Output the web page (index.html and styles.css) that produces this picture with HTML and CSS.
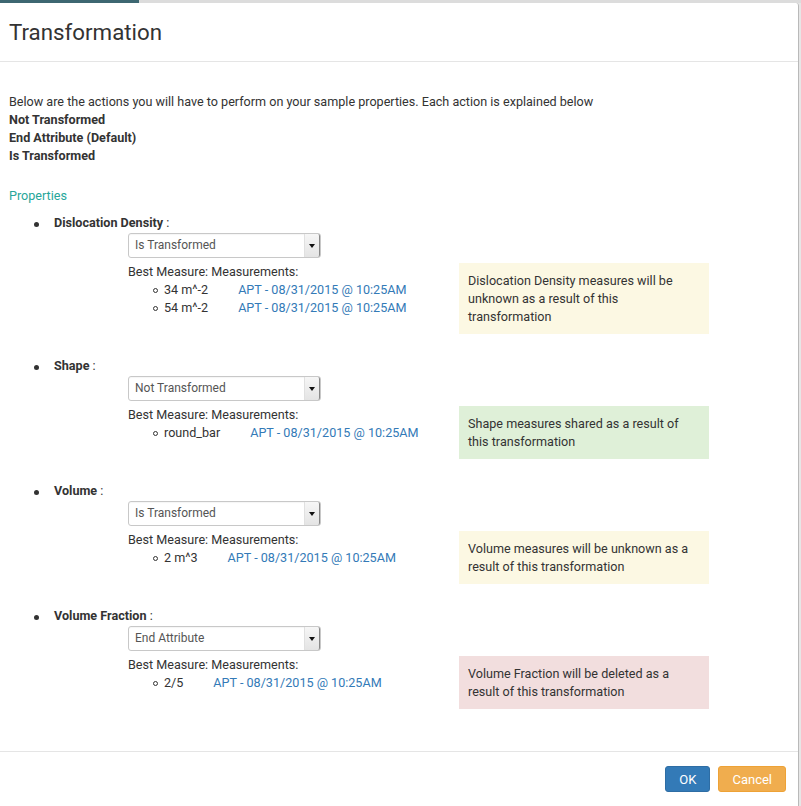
FILE: index.html
```html
<!DOCTYPE html>
<html lang="en">
<head>
<meta charset="utf-8">
<title>Transformation</title>
<link rel="stylesheet" href="styles.css">
</head>
<body>
<div class="topstrip"><div class="topstrip-tab"></div><div class="topstrip-rest"></div></div>
<div class="modal">
  <div class="modal-header">
    <h4 class="modal-title">Transformation</h4>
  </div>
  <div class="modal-body">
    <p class="intro">Below are the actions you will have to perform on your sample properties. Each action is explained below</p>
    <p class="action">Not Transformed</p>
    <p class="action">End Attribute (Default)</p>
    <p class="action">Is Transformed</p>

    <div class="section-title">Properties</div>
    <ul class="props">
      <li class="prop">
        <div class="prop-label"><b>Dislocation Density</b> :</div>
        <div class="prop-body">
          <div class="select"><span class="select-text">Is Transformed</span><span class="select-arrow"></span></div>
          <div class="prop-row">
            <div class="measures">
              <div>Best Measure: Measurements:</div>
              <ul class="mlist">
                <li><span class="val">34 m^-2</span><a class="mlink" href="#">APT - 08/31/2015 @ 10:25AM</a></li>
                <li><span class="val">54 m^-2</span><a class="mlink" href="#">APT - 08/31/2015 @ 10:25AM</a></li>
              </ul>
            </div>
            <div class="alert alert-warning">Dislocation Density measures will be unknown as a result of this transformation</div>
          </div>
        </div>
      </li>
      <li class="prop">
        <div class="prop-label"><b>Shape</b> :</div>
        <div class="prop-body">
          <div class="select"><span class="select-text">Not Transformed</span><span class="select-arrow"></span></div>
          <div class="prop-row">
            <div class="measures">
              <div>Best Measure: Measurements:</div>
              <ul class="mlist">
                <li><span class="val">round_bar</span><a class="mlink" href="#">APT - 08/31/2015 @ 10:25AM</a></li>
              </ul>
            </div>
            <div class="alert alert-success">Shape measures shared as a result of this transformation</div>
          </div>
        </div>
      </li>
      <li class="prop">
        <div class="prop-label"><b>Volume</b> :</div>
        <div class="prop-body">
          <div class="select"><span class="select-text">Is Transformed</span><span class="select-arrow"></span></div>
          <div class="prop-row">
            <div class="measures">
              <div>Best Measure: Measurements:</div>
              <ul class="mlist">
                <li><span class="val">2 m^3</span><a class="mlink" href="#">APT - 08/31/2015 @ 10:25AM</a></li>
              </ul>
            </div>
            <div class="alert alert-warning">Volume measures will be unknown as a result of this transformation</div>
          </div>
        </div>
      </li>
      <li class="prop">
        <div class="prop-label"><b>Volume Fraction</b> :</div>
        <div class="prop-body">
          <div class="select"><span class="select-text">End Attribute</span><span class="select-arrow"></span></div>
          <div class="prop-row">
            <div class="measures">
              <div>Best Measure: Measurements:</div>
              <ul class="mlist">
                <li><span class="val">2/5</span><a class="mlink" href="#">APT - 08/31/2015 @ 10:25AM</a></li>
              </ul>
            </div>
            <div class="alert alert-danger">Volume Fraction will be deleted as a result of this transformation</div>
          </div>
        </div>
      </li>
    </ul>
  </div>
  <div class="modal-footer">
    <button class="btn btn-primary">OK</button>
    <button class="btn btn-warning">Cancel</button>
  </div>
</div>
</body>
</html>
```
FILE: styles.css
```css
html, body {
  margin: 0;
  padding: 0;
}
body {
  background: #e6e6e6;
  font-family: Roboto, "Liberation Sans", Arial, sans-serif;
  font-size: 12.6px;
  line-height: 18px;
  color: #333;
  width: 801px;
  overflow: hidden;
}
.topstrip {
  display: flex;
  height: 3px;
}
.topstrip-tab {
  width: 139px;
  background: #3d6771;
}
.topstrip-rest {
  flex: 1;
  background: #dcdcdc;
}
.modal {
  width: 798px;
  background: #fff;
  border-right: 1px solid #b9b9b9;
  border-top-right-radius: 3px;
}
.modal-header {
  padding: 15px 9px;
  border-bottom: 1px solid #e5e5e5;
}
.modal-title {
  margin: 0;
  font-size: 22.3px;
  line-height: 28px;
  font-weight: 400;
  color: #333;
}
.modal-body {
  padding: 31px 9px 19px;
}
.intro, .action {
  margin: 0;
}
.action {
  font-weight: 700;
}
.section-title {
  margin-top: 22px;
  color: #26a69a;
}
.props {
  list-style: none;
  margin: 9px 0 0;
  padding: 0 0 0 45px;
}
.prop {
  position: relative;
  margin-bottom: 23px;
}
.prop::before {
  content: "";
  position: absolute;
  left: -20px;
  top: 8px;
  width: 5px;
  height: 5px;
  border-radius: 50%;
  background: #333;
}
.prop-label b {
  font-weight: 700;
}
.prop-body {
  margin-left: 74px;
}
.select {
  margin-top: 1px;
  width: 191px;
  height: 23px;
  border: 1px solid #c8c8c8;
  border-radius: 3px;
  display: flex;
  align-items: stretch;
  background: #fff;
  box-shadow: inset 0 1px 1px rgba(0,0,0,0.04);
}
.select-text {
  flex: 1;
  padding-left: 6px;
  font-size: 12px;
  line-height: 23px;
  color: #555;
}
.select-arrow {
  width: 14px;
  background: linear-gradient(#f6f6f6, #e4e4e4);
  border-left: 1px solid #e0e0e0;
  border-right: 1px solid #888;
  border-radius: 0 2px 2px 0;
  position: relative;
}
.select-arrow::after {
  content: "";
  position: absolute;
  left: 4px;
  top: 10px;
  border-left: 3px solid transparent;
  border-right: 3px solid transparent;
  border-top: 4px solid #111;
}
.prop-row {
  display: flex;
  margin-top: 5px;
  align-items: flex-start;
}
.measures {
  width: 331px;
}
.mlist {
  list-style: none;
  margin: 0;
  padding: 0 0 0 36px;
}
.mlist li {
  position: relative;
}
.mlist li::before {
  content: "";
  position: absolute;
  left: -11px;
  top: 7px;
  width: 3px;
  height: 3px;
  border: 1px solid #333;
  border-radius: 50%;
}
.val {
  margin-right: 30px;
}
.mlink {
  color: #337ab7;
  text-decoration: none;
}
.alert {
  width: 232px;
  padding: 9px 9px 8px;
  color: #333;
}
.alert-warning {
  background: #fcf8e3;
}
.alert-success {
  background: #dff0d8;
}
.alert-danger {
  background: #f2dede;
}
.modal-footer {
  border-top: 1px solid #e5e5e5;
  padding: 14px 12px 20px;
  display: flex;
  justify-content: flex-end;
  gap: 8px;
}
.btn {
  font-family: Roboto, "Liberation Sans", Arial, sans-serif;
  font-size: 13px;
  height: 26px;
  padding: 0 13px;
  border: 1px solid transparent;
  border-radius: 3px;
  color: #fff;
  cursor: pointer;
}
.btn-primary {
  background: #337ab7;
  border-color: #2e6da4;
}
.btn-warning {
  background: #f0ad4e;
  border-color: #eea236;
}
```
